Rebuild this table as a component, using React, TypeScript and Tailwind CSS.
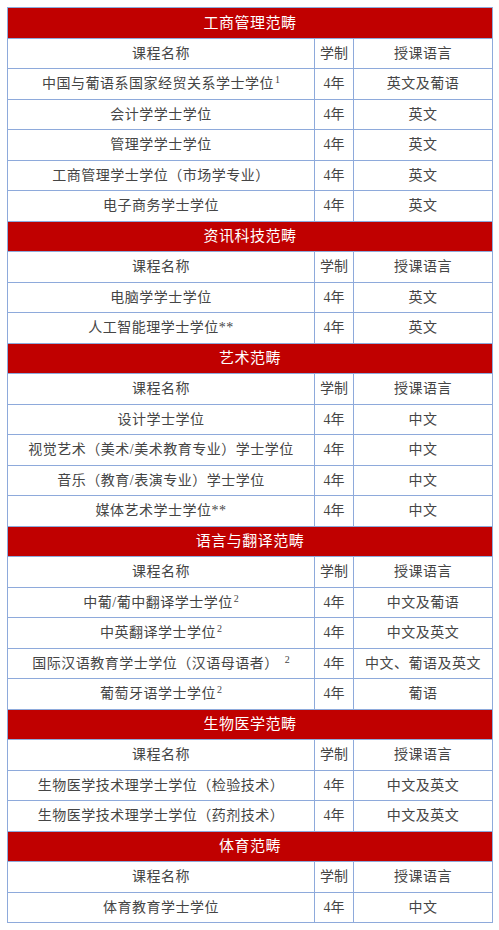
import React from 'react';

type Section = {
  title: string;
  rows: { name: string; sup?: string; supGap?: boolean; years: string; lang: string }[];
};

const sections: Section[] = [
  {
    title: '工商管理范畴',
    rows: [
      { name: '中国与葡语系国家经贸关系学士学位', sup: '1', years: '4年', lang: '英文及葡语' },
      { name: '会计学学士学位', years: '4年', lang: '英文' },
      { name: '管理学学士学位', years: '4年', lang: '英文' },
      { name: '工商管理学士学位（市场学专业）', years: '4年', lang: '英文' },
      { name: '电子商务学士学位', years: '4年', lang: '英文' },
    ],
  },
  {
    title: '资讯科技范畴',
    rows: [
      { name: '电脑学学士学位', years: '4年', lang: '英文' },
      { name: '人工智能理学士学位**', years: '4年', lang: '英文' },
    ],
  },
  {
    title: '艺术范畴',
    rows: [
      { name: '设计学士学位', years: '4年', lang: '中文' },
      { name: '视觉艺术（美术/美术教育专业）学士学位', years: '4年', lang: '中文' },
      { name: '音乐（教育/表演专业）学士学位', years: '4年', lang: '中文' },
      { name: '媒体艺术学士学位**', years: '4年', lang: '中文' },
    ],
  },
  {
    title: '语言与翻译范畴',
    rows: [
      { name: '中葡/葡中翻译学士学位', sup: '2', years: '4年', lang: '中文及葡语' },
      { name: '中英翻译学士学位', sup: '2', years: '4年', lang: '中文及英文' },
      { name: '国际汉语教育学士学位（汉语母语者）', sup: '2', supGap: true, years: '4年', lang: '中文、葡语及英文' },
      { name: '葡萄牙语学士学位', sup: '2', years: '4年', lang: '葡语' },
    ],
  },
  {
    title: '生物医学范畴',
    rows: [
      { name: '生物医学技术理学士学位（检验技术）', years: '4年', lang: '中文及英文' },
      { name: '生物医学技术理学士学位（药剂技术）', years: '4年', lang: '中文及英文' },
    ],
  },
  {
    title: '体育范畴',
    rows: [{ name: '体育教育学士学位', years: '4年', lang: '中文' }],
  },
];

const cell = 'border border-[#8eaadb] text-center align-middle p-0';

export default function App() {
  return (
    <div className="min-h-[930px] bg-white pt-[7px] pl-[7px]">
      <table
        className="w-[485px] border-collapse table-fixed text-[#454545] text-[14px] tracking-[0.5px]"
        style={{ fontFamily: '"Liberation Serif", "Noto Sans CJK SC", serif' }}
      >
        <colgroup>
          <col className="w-[307px]" />
          <col className="w-[39px]" />
          <col className="w-[139px]" />
        </colgroup>
        <tbody>
          {sections.map((s) => (
            <React.Fragment key={s.title}>
              <tr className="h-[30.5px] bg-[#c00000]">
                <td colSpan={3} className={`${cell} text-white text-[15px]`}>
                  {s.title}
                </td>
              </tr>
              <tr className="h-[30.5px]">
                <td className={cell}>课程名称</td>
                <td className={`${cell} tracking-normal`}>学制</td>
                <td className={cell}>授课语言</td>
              </tr>
              {s.rows.map((r) => (
                <tr key={r.name} className="h-[30.5px]">
                  <td className={`${cell} whitespace-nowrap`}>
                    {r.name}
                    {r.sup && (
                      <sup className={`text-[10px] tracking-normal ml-[1px] ${r.supGap ? 'ml-[6px]' : ''}`}>{r.sup}</sup>
                    )}
                  </td>
                  <td className={`${cell} tracking-normal`}>{r.years}</td>
                  <td className={`${cell} whitespace-nowrap`}>{r.lang}</td>
                </tr>
              ))}
            </React.Fragment>
          ))}
        </tbody>
      </table>
    </div>
  );
}
